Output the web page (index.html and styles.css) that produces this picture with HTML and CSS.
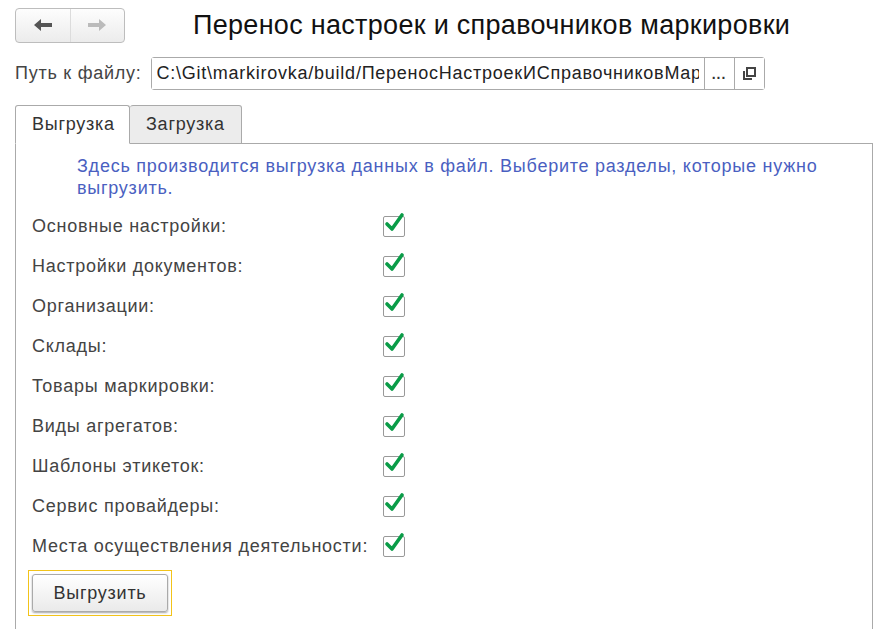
FILE: index.html
```html
<!DOCTYPE html>
<html lang="ru">
<head>
  <meta charset="UTF-8" />
  <title>Перенос настроек и справочников маркировки</title>
  <link rel="stylesheet" href="styles.css">
</head>
<body>
  <div class="header">
    <div class="nav-buttons">
      <button class="nav-btn">
        <svg width="18" height="12" viewBox="0 0 18 12"><path d="M0 6 L7 0 L7 4 L18 4 L18 8 L7 8 L7 12 Z" fill="#555"/></svg>
      </button>
      <button class="nav-btn">
        <svg width="18" height="12" viewBox="0 0 18 12"><path d="M18 6 L11 0 L11 4 L0 4 L0 8 L11 8 L11 12 Z" fill="#bbb"/></svg>
      </button>
    </div>
    <h1>Перенос настроек и справочников маркировки</h1>
  </div>

  <div class="path-row">
    <label for="path">Путь к файлу:</label>
    <div class="path-field">
      <input type="text" id="path" value="C:\Git\markirovka/build/ПереносНастроекИСправочниковМаркировки.json">
      <button class="field-btn dots">...</button>
      <button class="field-btn">
        <svg width="13" height="13" viewBox="0 0 13 13"><path d="M4 1 H12 V9 H4 Z" fill="none" stroke="#444" stroke-width="2"/><path d="M1 4 V12 H9" fill="none" stroke="#444" stroke-width="2"/></svg>
      </button>
    </div>
  </div>

  <div class="tabs">
    <div class="tab active">Выгрузка</div>
    <div class="tab">Загрузка</div>
    <div class="tab-rest"></div>
  </div>

  <div class="panel">
    <p class="info">Здесь производится выгрузка данных в файл. Выберите разделы, которые нужно выгрузить.</p>
    <div class="options" id="options"></div>
    <div class="focus-frame">
      <button class="main-btn">Выгрузить</button>
    </div>
  </div>

  <script>
    const sections = [
      "Основные настройки:",
      "Настройки документов:",
      "Организации:",
      "Склады:",
      "Товары маркировки:",
      "Виды агрегатов:",
      "Шаблоны этикеток:",
      "Сервис провайдеры:",
      "Места осуществления деятельности:"
    ];

    const check = '<svg width="24" height="24" viewBox="0 0 24 24"><path d="M5 13 L10 18 L20 4" fill="none" stroke="#0a9c48" stroke-width="3.6" stroke-linecap="round" stroke-linejoin="round"/></svg>';

    const list = document.getElementById("options");
    sections.forEach(name => {
      const row = document.createElement("div");
      row.className = "option";
      row.innerHTML = `<span class="option-label">${name}</span><span class="checkbox">${check}</span>`;
      list.appendChild(row);
    });
  </script>
</body>
</html>
```

FILE: styles.css
```css
body {
  font-family: "Liberation Sans", Arial, sans-serif;
  margin: 0;
  padding: 0 15px;
  background-color: #fff;
  color: #333;
  font-size: 18px;
  letter-spacing: 0.75px;
}
.header {
  display: flex;
  align-items: center;
  height: 50px;
}
.nav-buttons {
  display: flex;
  width: 110px;
  height: 35px;
  border: 1px solid #bdbdbd;
  border-radius: 4px;
  box-sizing: border-box;
  background: linear-gradient(#fdfdfd, #ececec);
}
.nav-btn {
  flex: 1;
  border: none;
  background: transparent;
  padding: 0;
  display: flex;
  align-items: center;
  justify-content: center;
}
.nav-btn + .nav-btn {
  border-left: 1px solid #dcdcdc;
}
h1 {
  font-size: 27px;
  font-weight: normal;
  color: #111;
  letter-spacing: 0.3px;
  margin: 0 0 0 68px;
}
.path-row {
  display: flex;
  align-items: center;
  height: 34px;
  margin-top: 6px;
}
.path-row label {
  color: #444;
  margin-right: 9px;
}
.path-field {
  display: flex;
  width: 614px;
  height: 33px;
  border: 1px solid #aaa;
  border-radius: 3px;
  box-sizing: border-box;
}
.path-field input {
  flex: 1;
  min-width: 0;
  border: none;
  padding: 0 5px;
  font-family: inherit;
  font-size: 18px;
  letter-spacing: 0.75px;
  color: #222;
  outline: none;
}
.field-btn {
  width: 30px;
  border: none;
  border-left: 1px solid #aaa;
  background: #fff;
  padding: 0;
  display: flex;
  align-items: center;
  justify-content: center;
}
.field-btn.dots {
  font-weight: bold;
  font-size: 14px;
  color: #333;
  letter-spacing: 1px;
  padding-top: 2px;
}
.tabs {
  display: flex;
  margin-top: 15px;
  height: 39px;
}
.tab {
  box-sizing: border-box;
  padding-left: 16px;
  border: 1px solid #aaa;
  background: #ececec;
  display: flex;
  align-items: center;
  color: #333;
  border-radius: 3px 3px 0 0;
}
.tab.active {
  width: 115px;
  background: #fff;
  border-bottom-color: #fff;
}
.tab + .tab {
  width: 112px;
  border-left: none;
}
.tab-rest {
  width: 631px;
  border-bottom: 1px solid #aaa;
}
.panel {
  width: 858px;
  box-sizing: border-box;
  border: 1px solid #aaa;
  border-top: none;
  height: 500px;
  padding: 11px 16px 0;
}
.info {
  color: #4a5fc1;
  margin: 0 0 0 45px;
  line-height: 22px;
  padding-right: 10px;
}
.options {
  margin-top: 7px;
}
.option {
  display: flex;
  align-items: center;
  height: 40px;
}
.option-label {
  width: 351px;
  color: #444;
}
.checkbox {
  position: relative;
  width: 22px;
  height: 21px;
  border: 1px solid #999;
  border-radius: 2px;
  box-sizing: border-box;
}
.checkbox svg {
  position: absolute;
  left: -2px;
  top: -6px;
}
.focus-frame {
  width: 144px;
  height: 46px;
  box-sizing: border-box;
  border: 1px solid #f2c31a;
  padding: 3px;
  margin: 4px 0 0 -4px;
  display: flex;
}
.main-btn {
  flex: 1;
  border: 1px solid #aaa;
  border-radius: 3px;
  background: linear-gradient(#ffffff, #eaeaea);
  box-shadow: 0 1px 2px rgba(0,0,0,0.35);
  font-family: inherit;
  font-size: 18px;
  letter-spacing: 0.75px;
  color: #333;
  padding: 0;
}
```
